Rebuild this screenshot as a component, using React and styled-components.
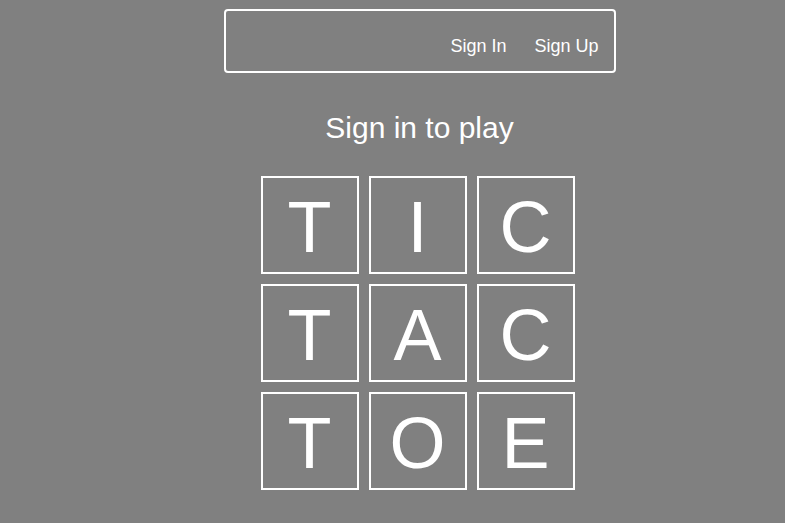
import React from "react";
import styled, { createGlobalStyle } from "styled-components";

const GlobalStyle = createGlobalStyle`
  html, body {
    margin: 0;
    padding: 0;
    background-color: #808080;
    color: #ffffff;
    font-family: "Liberation Sans", Arial, Helvetica, sans-serif;
  }
`;

const Page = styled.main`
  display: flex;
  flex-direction: column;
  align-items: center;
  padding: 9px 0 0 54px;
  min-height: 100vh;
  box-sizing: border-box;
`;

const NavBar = styled.nav`
  width: 392px;
  height: 64px;
  box-sizing: border-box;
  border: 2px solid #ffffff;
  border-radius: 4px;
  display: flex;
  justify-content: flex-end;
  align-items: center;
  gap: 28px;
  padding: 10px 15px 0 0;
`;

const NavLink = styled.a`
  color: #ffffff;
  font-size: 18px;
  text-decoration: none;
  cursor: pointer;
`;

const Title = styled.h1`
  margin: 38px 0 0;
  font-size: 30px;
  font-weight: normal;
  line-height: 34px;
`;

const Board = styled.div`
  margin: 31px 4px 0 0;
  display: grid;
  grid-template-columns: repeat(3, 98px);
  grid-auto-rows: 98px;
  gap: 10px;
`;

const Cell = styled.div`
  box-sizing: border-box;
  border: 2px solid #ffffff;
  display: flex;
  align-items: center;
  justify-content: center;
  font-size: 72px;
  line-height: 1;
  padding-top: 3px;
`;

const letters = ["T", "I", "C", "T", "A", "C", "T", "O", "E"];

const App = () => {
  return (
    <>
      <GlobalStyle />
      <Page>
        <NavBar>
          <NavLink>Sign In</NavLink>
          <NavLink>Sign Up</NavLink>
        </NavBar>
        <Title>Sign in to play</Title>
        <Board>
          {letters.map((l, i) => (
            <Cell key={i}>{l}</Cell>
          ))}
        </Board>
      </Page>
    </>
  );
};

export default App;
